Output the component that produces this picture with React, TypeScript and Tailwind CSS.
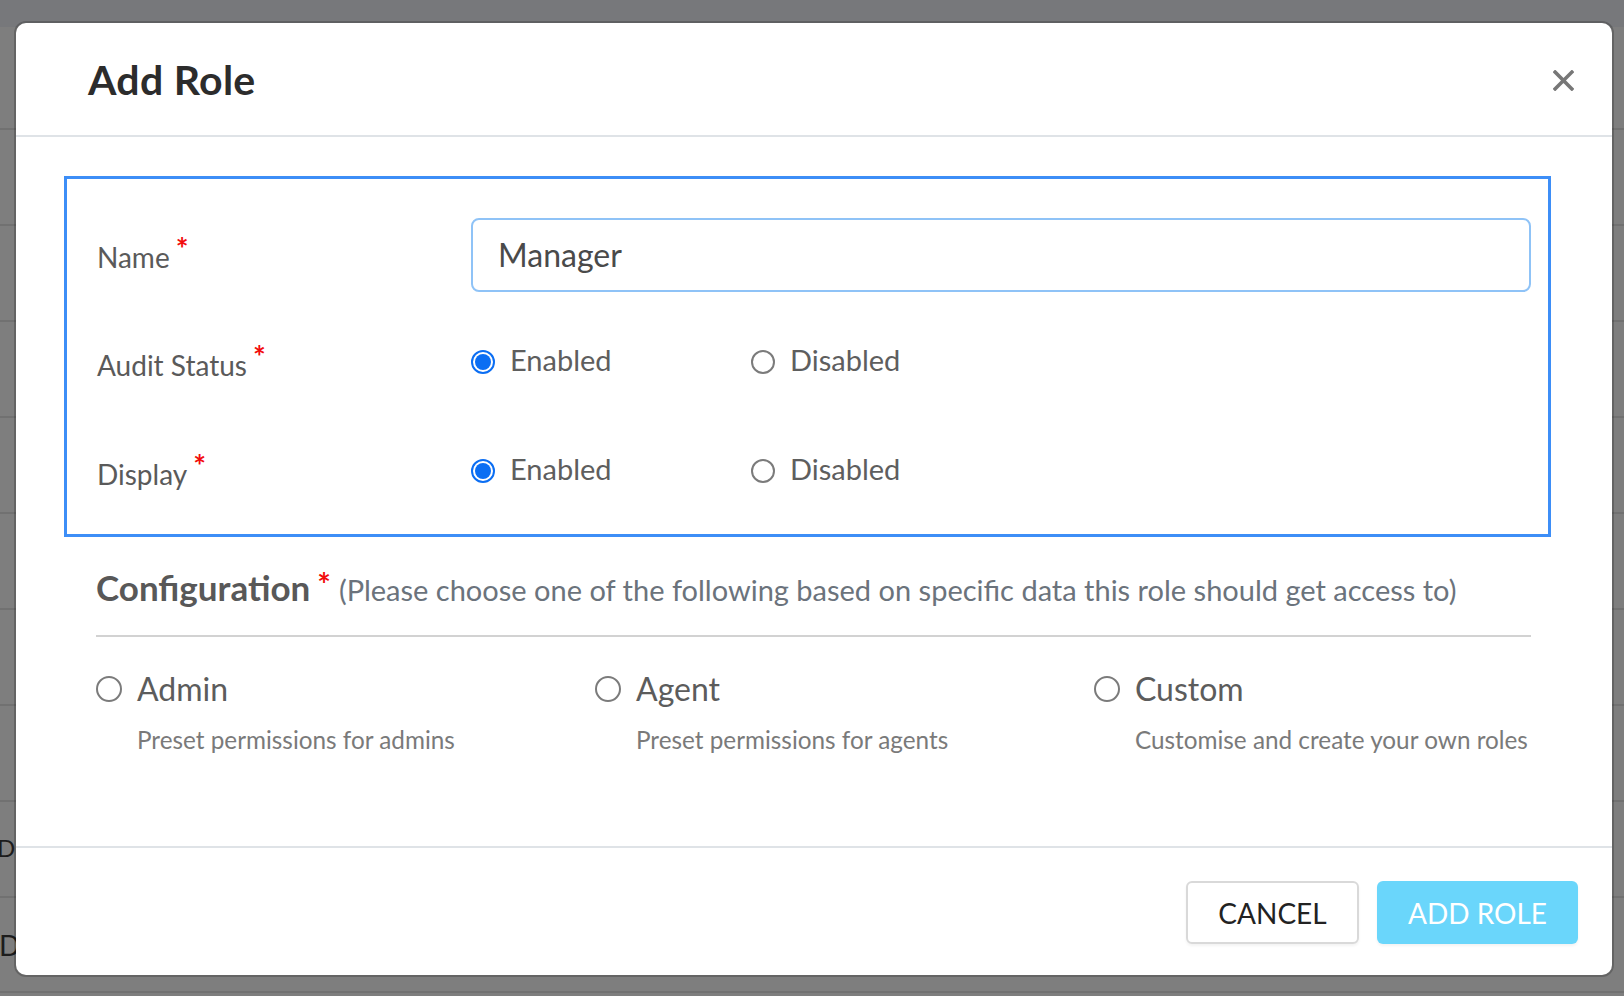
import React from "react";

type Opt = { label: string; checked?: boolean };

function Radio({ checked, size = 24 }: { checked?: boolean; size?: number }) {
  const cls = size === 24 ? "w-[24px] h-[24px]" : "w-[26px] h-[26px]";
  if (checked) {
    return (
      <span className={`${cls} shrink-0 rounded-full border-2 border-[#0b6ef3] p-[2px] flex`}>
        <span className="flex-1 rounded-full bg-[#0b6ef3]" />
      </span>
    );
  }
  return <span className={`${cls} shrink-0 rounded-full border-2 border-[#7b7b7b] bg-white`} />;
}

function Required() {
  return (
    <span className="text-[#f20d0d] text-[30px] font-bold leading-none ml-[6px] -translate-y-[9px] inline-block">
      *
    </span>
  );
}

function RadioRow({ label, options, className }: { label: string; options: Opt[]; className: string }) {
  return (
    <div className={`flex items-center h-[25px] ${className}`}>
      <div className="w-[374px] flex items-center text-[28px] text-[#5a5a5a] mt-[7px]">
        {label}
        <Required />
      </div>
      {options.map((o, i) => (
        <div key={i} className="w-[280px] flex items-center gap-[15px]">
          <Radio checked={o.checked} />
          <span className="text-[29px] text-[#5e5e5e] leading-none mt-[-4px]">{o.label}</span>
        </div>
      ))}
    </div>
  );
}

const configs = [
  { title: "Admin", desc: "Preset permissions for admins" },
  { title: "Agent", desc: "Preset permissions for agents" },
  { title: "Custom", desc: "Customise and create your own roles" },
];

export default function App() {
  return (
    <div className="relative w-[1624px] h-[996px] overflow-hidden bg-[#7e7e7e] font-['Lato',sans-serif]">
      {/* page behind the overlay */}
      <div className="h-[27px] bg-[#77787b]" />
      <div className="h-[103px] border-b-2 border-[#717171]" />
      {[0, 1, 2, 3, 4, 5, 6].map((i) => (
        <div key={i} className="h-[96px] border-b-2 border-[#717171]" />
      ))}
      <div className="h-[96px] border-b-2 border-[#717171] flex items-center text-[24px] text-[#1c1c1c] ml-[-3px] pb-[2px]">
        Disabled
      </div>
      <div className="h-[95px] border-b-2 border-[#717171] flex items-center text-[28px] text-[#1c1c1c] ml-[-1px]">
        Disabled
      </div>

      {/* modal */}
      <div className="absolute left-[16px] top-[23px] w-[1596px] h-[952px] bg-white rounded-[10px] shadow-[0_0_0_2px_rgba(0,0,0,0.2)] flex flex-col">
        <div className="h-[114px] shrink-0 border-b-2 border-[#dfe3e7] flex items-center justify-between pl-[72px] pr-[38px]">
          <h1 className="text-[41px] font-bold text-[#2c2c2c] leading-none tracking-[0.3px] mt-[1px]">Add Role</h1>
          <svg width="21" height="21" viewBox="0 0 20 20" className="mt-[3px]">
            <path d="M2 2 L18 18 M18 2 L2 18" stroke="#777" strokeWidth="3.4" strokeLinecap="square" />
          </svg>
        </div>

        <div className="flex-1">
          <div className="mt-[39px] ml-[48px] mr-[61px] border-[3px] border-[#3d8ef7] pt-[39px] pb-[51px] pl-[30px] pr-[17px]">
            <div className="flex items-center h-[74px]">
              <div className="w-[374px] flex items-center text-[28px] text-[#5a5a5a] mt-[4px]">
                Name
                <Required />
              </div>
              <div className="flex-1 h-[74px] rounded-[8px] border-2 border-[#8fc3f7] flex items-center pl-[25px] text-[32px] text-[#4a4a4a]">
                Manager
              </div>
            </div>
            <RadioRow
              label="Audit Status"
              className="mt-[57px]"
              options={[{ label: "Enabled", checked: true }, { label: "Disabled" }]}
            />
            <RadioRow
              label="Display"
              className="mt-[84px]"
              options={[{ label: "Enabled", checked: true }, { label: "Disabled" }]}
            />
          </div>

          <div className="mt-[33px] ml-[80px] mr-[81px] pb-[30px] border-b-2 border-[#d2d2d2] flex items-baseline">
            <span className="text-[35px] font-bold text-[#585858] leading-none">Configuration</span>
            <span className="text-[#f20d0d] text-[32px] font-bold leading-none ml-[7px] self-start mt-[-1px]">*</span>
            <span className="text-[29px] text-[#6b737c] leading-none ml-[8px]">
              (Please choose one of the following based on specific data this role should get access to)
            </span>
          </div>

          <div className="ml-[80px] mt-[39px] flex">
            {configs.map((c) => (
              <div key={c.title} className="w-[499px] shrink-0">
                <div className="flex items-center gap-[15px] h-[26px]">
                  <Radio size={26} />
                  <span className="text-[32px] text-[#5c5c5c] leading-none">{c.title}</span>
                </div>
                <div className="pl-[41px] mt-[26px] text-[24.3px] text-[#7a7a7a] leading-none">{c.desc}</div>
              </div>
            ))}
          </div>
        </div>

        <div className="shrink-0 border-t-2 border-[#dfe3e7] pt-[33px] pb-[31px] pr-[34px] flex justify-end gap-[18px]">
          <button className="w-[173px] h-[63px] rounded-[6px] border-2 border-[#d9d9d9] bg-white text-[28px] text-[#222] shadow-[0_2px_3px_rgba(0,0,0,0.05)]">
            CANCEL
          </button>
          <button className="w-[201px] h-[63px] rounded-[6px] bg-[#6ad6fb] text-[28px] text-white shadow-[0_2px_3px_rgba(0,0,0,0.05)]">
            ADD ROLE
          </button>
        </div>
      </div>
    </div>
  );
}
